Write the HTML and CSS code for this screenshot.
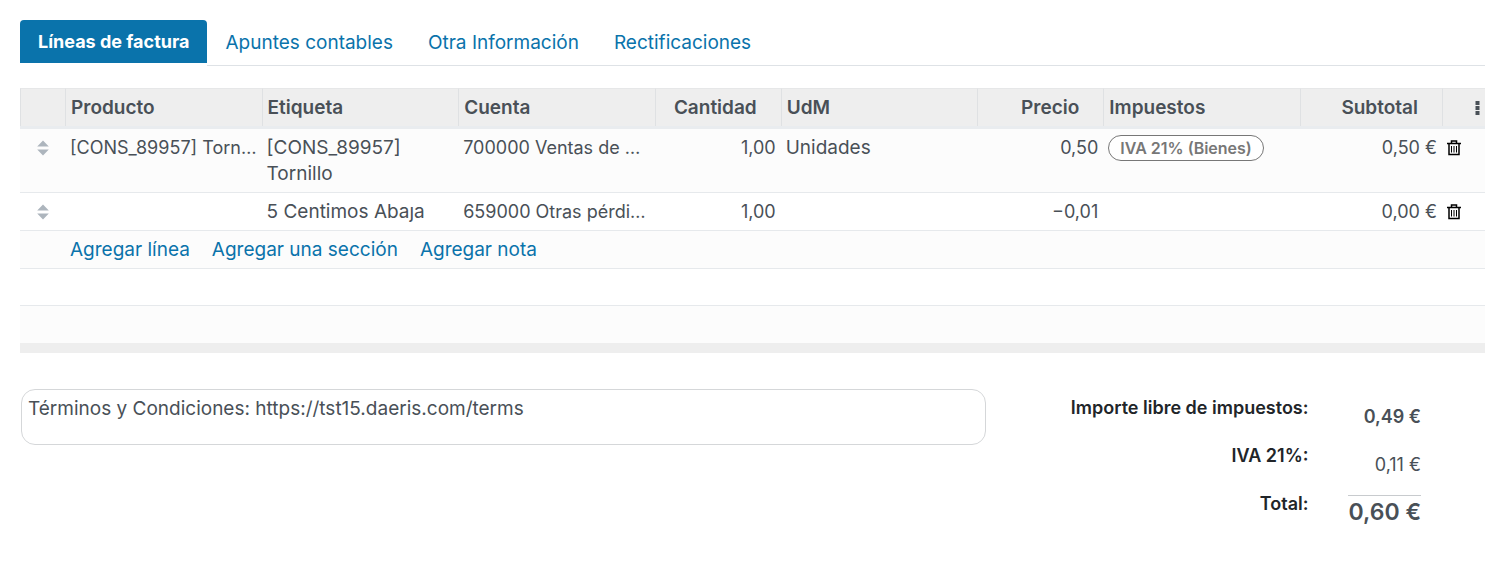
FILE: index.html
```html
<!DOCTYPE html>
<html lang="es">
<head>
<meta charset="utf-8">
<meta name="viewport" content="width=device-width, initial-scale=1">
<title>Factura</title>
<link rel="stylesheet" href="styles.css">
</head>
<body>
<svg class="sprite" aria-hidden="true">
  <symbol id="sort" viewBox="0 0 12 16"><path d="M6 0.5 11.8 6.5H0.2zM6 15.5 11.8 9.5H0.2z" fill="currentColor"/></symbol>
  <symbol id="trash" viewBox="0 0 14 16"><path d="M4.5 3V1H9.5V3M0 3.5H14M2 3.5V14.5H12V3.5" fill="none" stroke="currentColor" stroke-width="1.5"/><path d="M4.5 6V12.5M7 6V12.5M9.5 6V12.5" fill="none" stroke="currentColor"/></symbol>
</svg>
<main class="sheet">
  <nav class="tabs">
    <a class="tab tab-active" href="#lineas">Líneas de factura</a>
    <a class="tab" href="#apuntes">Apuntes contables</a>
    <a class="tab" href="#otra">Otra Información</a>
    <a class="tab" href="#rectificaciones">Rectificaciones</a>
  </nav>
  <table class="lines" id="lineas">
    <colgroup>
      <col class="col-handle"><col><col><col><col class="col-number"><col><col class="col-number"><col><col class="col-total"><col class="col-action">
    </colgroup>
    <thead>
      <tr><th></th><th>Producto</th><th>Etiqueta</th><th>Cuenta</th><th class="number">Cantidad</th><th>UdM</th><th class="number">Precio</th><th>Impuestos</th><th class="number">Subtotal</th>
      <th class="menu-cell"><button class="icon-button" aria-label="Columnas opcionales"><svg class="dots" viewBox="0 0 5 16"><path d="M0.5 1h4v4h-4zM0.5 6h4v4h-4zM0.5 11h4v4h-4z" fill="currentColor"/></svg></button></th></tr>
    </thead>
    <tbody>
      <tr>
        <td class="handle"><svg class="sort"><use href="#sort"/></svg></td>
        <td class="clip">[CONS_89957] Torn…</td>
        <td>[CONS_89957] Tornillo</td>
        <td class="clip">700000 Ventas de …</td>
        <td class="number">1,00</td><td>Unidades</td><td class="number">0,50</td>
        <td><span class="tag">IVA 21% (Bienes)</span></td>
        <td class="number">0,50 €</td>
        <td><button class="icon-button" aria-label="Eliminar línea"><svg class="trash"><use href="#trash"/></svg></button></td>
      </tr>
      <tr>
        <td class="handle"><svg class="sort"><use href="#sort"/></svg></td>
        <td></td><td>5 Centimos Abaȷa</td>
        <td class="clip">659000 Otras pérdi…</td>
        <td class="number">1,00</td><td></td><td class="number">−0,01</td><td></td>
        <td class="number">0,00 €</td>
        <td><button class="icon-button" aria-label="Eliminar línea"><svg class="trash"><use href="#trash"/></svg></button></td>
      </tr>
      <tr><td></td><td colspan="9"><div class="add-links"><a href="#linea">Agregar línea</a><a href="#seccion">Agregar una sección</a><a href="#nota">Agregar nota</a></div></td></tr>
      <tr class="blank"><td colspan="10"></td></tr>
      <tr class="blank"><td colspan="10"></td></tr>
    </tbody>
    <tfoot><tr><td colspan="10"></td></tr></tfoot>
  </table>
  <section class="summary">
    <textarea class="terms" aria-label="Términos y condiciones">Términos y Condiciones: https://tst15.daeris.com/terms</textarea>
    <dl class="totals">
      <dt>Importe libre de impuestos:</dt><dd class="strong">0,49 €</dd>
      <dt>IVA 21%:</dt><dd>0,11 €</dd>
      <dt>Total:</dt><dd class="grand">0,60 €</dd>
    </dl>
  </section>
</main>
</body>
</html>
```
FILE: styles.css
```css
* { box-sizing: border-box; }
body {
  margin: 0;
  background: #fff;
  color: #495057;
  font: 19px/26px Inter, "Open Sans", sans-serif;
}
a { color: #0a73ab; text-decoration: none; }
.sprite { position: absolute; width: 0; height: 0; }
.sheet { padding: 20px 13px 20px 20px; }

.tabs { display: flex; align-items: flex-start; margin-bottom: 22px; }
.tab { padding: 10px 17px 9px 18px; border-bottom: 1px solid #dee2e6; }
.tab:last-child { flex: 1; }
.tab-active {
  padding: 9px 18px 8px;
  border: 0;
  border-radius: 4px 4px 0 0;
  background: #0a73ab;
  color: #fff;
  font-size: 18px;
  font-weight: 700;
}

.lines { width: 100%; table-layout: fixed; border-collapse: separate; border-spacing: 0; }
.col-handle { width: 45px; }
.col-action { width: 43px; }
.col-number { width: 8.6%; }
.col-total { width: 9.7%; }
th {
  padding: 6px 5px 5px;
  border: solid #dfe1e3;
  border-width: 1px 0 0 1px;
  border-top-color: #e6e7e8;
  background: #eee;
  font-weight: 600;
  text-align: left;
  box-shadow: 0 3px #e9ecef;
}
thead::after { content: ""; display: table-row; height: 3px; }
td { padding: 6px 5px 5px; border-bottom: 1px solid #e6e9ec; vertical-align: top; }
tbody tr:nth-child(odd) td { background: #fcfcfc; }
.number { text-align: right; }
th.number { padding-right: 24px; }
td.number, .clip { font-size: 18px; }
.clip { overflow: hidden; text-overflow: ellipsis; white-space: nowrap; }
.handle { text-align: center; color: #adb5bd; }
.sort { width: 12px; height: 16px; margin-top: 5px; vertical-align: top; }
.icon-button { display: inline-flex; align-items: center; height: 26px; padding: 0; border: 0; background: none; color: #000; vertical-align: top; }
.trash { width: 14px; height: 16px; }
.dots { width: 5px; height: 16px; color: #495057; }
.menu-cell { text-align: right; }
.tag {
  display: inline-block;
  padding: 0 11px;
  border: 1px solid #777;
  border-radius: 13px;
  background: #fff;
  color: #777;
  font-size: 16px;
  font-weight: 600;
  line-height: 24px;
  vertical-align: top;
}
.add-links { display: flex; gap: 22px; }
.blank td { height: 37px; }
.blank:last-child td { border: 0; }
tfoot td { height: 10px; padding: 0; border: 0; background: #eee; }

.summary { display: flex; align-items: flex-start; margin-top: 36px; }
.terms {
  width: 65.9%;
  height: 56px;
  margin-left: 1px;
  padding: 6px;
  border: 1px solid #d5d7d9;
  border-radius: 14px;
  background: #fff;
  color: inherit;
  font: inherit;
  resize: none;
}
.totals {
  flex: 1;
  display: grid;
  grid-template-columns: 1fr auto;
  grid-auto-rows: 48px;
  column-gap: 40px;
  margin: 6px 64px 0 0;
  text-align: right;
}
.totals dt { color: #212529; font-size: 18px; font-weight: 600; }
.totals dd { margin: 0; padding-top: 9px; font-size: 18px; }
.totals .strong { font-weight: 600; }
.totals .grand { align-self: start; margin-top: 4px; padding-top: 3px; border-top: 1px solid #c8cbce; font-size: 23px; font-weight: 600; }
```
